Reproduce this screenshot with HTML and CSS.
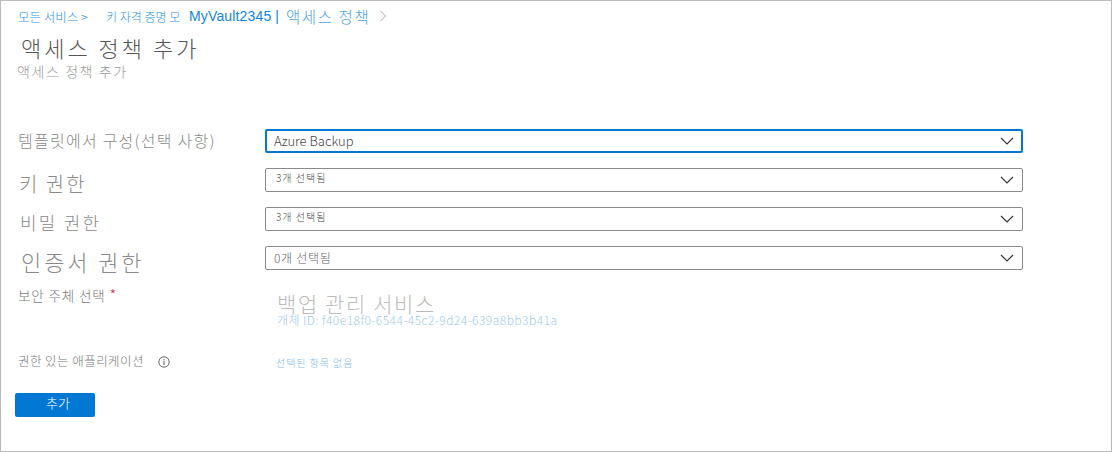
FILE: index.html
```html
<html>
<head>
	<title>액세스 정책 추가</title>
	<link rel="stylesheet" href="styles.css">
</head>
<body>

	<div class="frame">

		<div class="crumbs">
			<a class="crumb c1">모든 서비스 &gt;</a>
			<a class="crumb c2">키 자격 증명 모</a>
			<a class="crumb c3">MyVault2345 |</a>
			<a class="crumb c4">액세스 정책</a>
			<svg class="crumbarrow" width="8" height="12" viewBox="0 0 8 12"><path d="M1.5 1 L6.5 6 L1.5 11" fill="none" stroke="#a6a6a6" stroke-width="1"/></svg>
		</div>

		<h1 class="title">액세스 정책 추가</h1>
		<div class="subtitle">액세스 정책 추가</div>

		<div class="row row-first">
			<label class="label l-template">템플릿에서 구성(선택 사항)</label>
			<div class="select focused">
				<span class="value v-normal">Azure Backup</span>
				<svg class="chevron" width="14" height="8" viewBox="0 0 14 8"><path d="M1 1 L7 7 L13 1" fill="none" stroke="#333" stroke-width="1.1"/></svg>
			</div>
		</div>

		<div class="row">
			<label class="label l-key">키 권한</label>
			<div class="select">
				<span class="value v-small">3개 선택됨</span>
				<svg class="chevron" width="14" height="8" viewBox="0 0 14 8"><path d="M1 1 L7 7 L13 1" fill="none" stroke="#333" stroke-width="1.1"/></svg>
			</div>
		</div>

		<div class="row">
			<label class="label l-secret">비밀 권한</label>
			<div class="select">
				<span class="value v-small">3개 선택됨</span>
				<svg class="chevron" width="14" height="8" viewBox="0 0 14 8"><path d="M1 1 L7 7 L13 1" fill="none" stroke="#333" stroke-width="1.1"/></svg>
			</div>
		</div>

		<div class="row">
			<label class="label l-cert">인증서 권한</label>
			<div class="select">
				<span class="value v-count">0개 선택됨</span>
				<svg class="chevron" width="14" height="8" viewBox="0 0 14 8"><path d="M1 1 L7 7 L13 1" fill="none" stroke="#333" stroke-width="1.1"/></svg>
			</div>
		</div>

		<div class="row row-principal">
			<label class="label l-small l-principal">보안 주체 선택 <span class="required">*</span></label>
			<div class="principal">
				<div class="pname">백업 관리 서비스</div>
				<div class="pid">개체 ID: f40e18f0-6544-45c2-9d24-639a8bb3b41a</div>
			</div>
		</div>

		<div class="row row-app">
			<label class="label l-small l-app">권한 있는 애플리케이션
				<svg class="info" width="12" height="12" viewBox="0 0 12 12"><circle cx="6" cy="6" r="5.2" fill="none" stroke="#666" stroke-width="1"/><path d="M6 5 V9 M6 3 V4.2" stroke="#666" stroke-width="1.1"/></svg>
			</label>
			<div class="none">선택된 항목 없음</div>
		</div>

		<button type="button" class="button">추가</button>

	</div>

</body>
</html>
```

FILE: styles.css
```css
html, body {
	margin: 0;
	padding: 0;
	background: white;
}
body {
	font-family: "Noto Sans CJK KR", "Liberation Sans", sans-serif;
	font-weight: 300;
}
.frame {
	box-sizing: border-box;
	width: 1112px;
	height: 452px;
	border: 1px solid #bbbbbb;
	padding: 0 0 0 14px;
	overflow: hidden;
}
.crumbs {
	display: flex;
	align-items: center;
	height: 28px;
	padding-top: 1px;
	padding-left: 3px;
	color: #2b93e0;
	white-space: nowrap;
}
.crumb {
	font-size: 12.5px;
}
.c1 {
	width: 88px;
}
.c2 {
	width: 83px;
	font-size: 12px;
}
.c3 {
	width: 97px;
	font-family: "Liberation Sans", sans-serif;
	font-size: 14px;
	letter-spacing: 0.15px;
	color: #0f86dc;
}
.c4 {
	font-size: 15.5px;
	letter-spacing: 1.6px;
	color: #4aa3e4;
}
.crumbarrow {
	margin-left: 9px;
}
.title {
	margin: 2px 0 0 6px;
	font-size: 22px;
	line-height: 30px;
	font-weight: 300;
	letter-spacing: 3px;
	color: #555555;
}
.subtitle {
	margin: 1px 0 0 2px;
	font-size: 14px;
	line-height: 16px;
	letter-spacing: 1.6px;
	color: #999999;
}
.row {
	display: flex;
	align-items: center;
	height: 24px;
	margin-top: 15px;
}
.row-first {
	margin-top: 50px;
}
.label {
	box-sizing: border-box;
	width: 250px;
	flex: none;
	color: #8a8a8a;
	white-space: nowrap;
}
.l-template {
	padding: 0 0 2px 3px;
	font-size: 16px;
	letter-spacing: 1.25px;
}
.l-key {
	padding: 6px 0 0 4px;
	font-size: 20px;
	letter-spacing: 2px;
}
.l-secret {
	padding: 6px 0 0 5px;
	font-size: 18px;
	letter-spacing: 2.2px;
}
.l-cert {
	padding: 6px 0 0 6px;
	font-size: 22px;
	letter-spacing: 2.9px;
}
.l-small {
	padding-left: 3px;
	letter-spacing: 0.5px;
	color: #777777;
}
.l-principal {
	padding-top: 2px;
	font-size: 13.5px;
	letter-spacing: 0.9px;
}
.required {
	font-size: 15px;
	line-height: 14px;
	color: #c4314b;
}
.select {
	box-sizing: border-box;
	display: flex;
	align-items: center;
	justify-content: space-between;
	width: 758px;
	height: 24px;
	border: 1px solid #8a8a8a;
	border-radius: 2px;
	padding: 0 8px;
}
.focused {
	border: 2px solid #0078d4;
	padding: 0 7px;
}
.value {
	color: #444444;
}
.v-normal {
	padding-bottom: 2px;
	font-size: 13px;
}
.v-count {
	padding-bottom: 2px;
	font-size: 12px;
	letter-spacing: 0.7px;
	color: #666666;
}
.v-small {
	padding: 0 0 5px 2px;
	font-size: 10px;
	letter-spacing: 1px;
}
.chevron {
	flex: none;
}
.row-principal {
	align-items: flex-start;
	height: 46px;
	margin-top: 13px;
}
.principal {
	margin: 10px 0 0 12px;
}
.pname {
	font-size: 21px;
	line-height: 20px;
	letter-spacing: 1.6px;
	color: #bbbbbb;
}
.pid {
	font-size: 12px;
	line-height: 13px;
	letter-spacing: 0.46px;
	color: #9ccbee;
}
.row-app {
	margin-top: 22px;
	height: 20px;
}
.l-app {
	display: flex;
	align-items: center;
	gap: 14px;
	font-size: 12.5px;
	letter-spacing: 0.45px;
	padding-bottom: 2px;
}
.info {
	flex: none;
	margin-top: 4px;
}
.none {
	margin-left: 11px;
	font-size: 10px;
	letter-spacing: 0.95px;
	padding-top: 2px;
	color: #7fbce9;
}
.button {
	display: block;
	width: 80px;
	height: 24px;
	margin-top: 22px;
	border: none;
	border-radius: 2px;
	padding: 0 0 6px 6px;
	background: #0078d4;
	color: white;
	font-family: "Noto Sans CJK KR", sans-serif;
	font-weight: 300;
	font-size: 13px;
}
```
